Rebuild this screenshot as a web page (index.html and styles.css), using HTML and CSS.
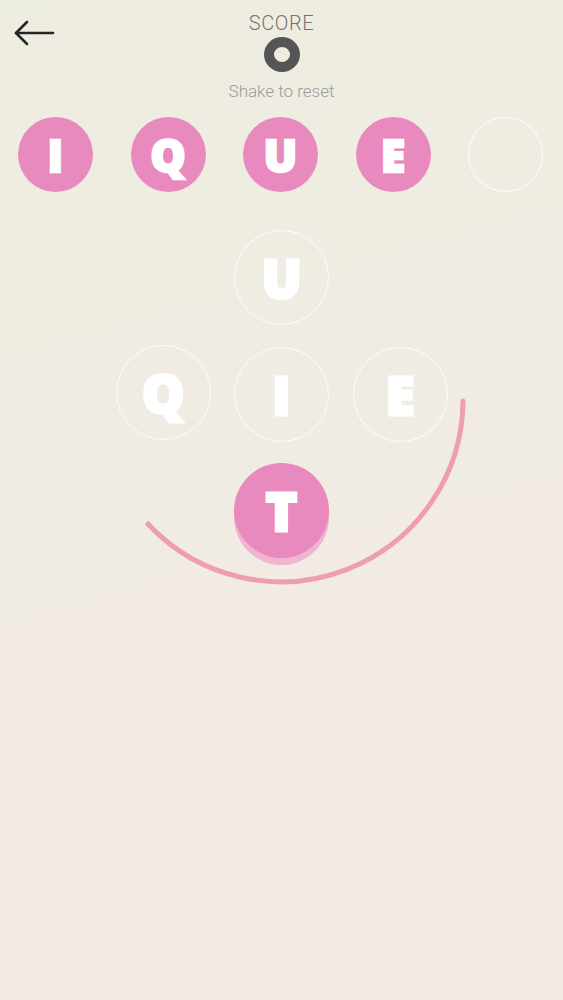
FILE: index.html
```html
<!DOCTYPE html>
<html lang="en">
<head>
<meta charset="utf-8">
<title>Score</title>
<link rel="stylesheet" href="styles.css">
</head>
<body>
<div class="app">
  <header class="top">
    <div class="back" aria-label="Back">
      <svg width="44" height="30" viewBox="0 0 44 30">
        <path d="M2 14 H39" fill="none" stroke="#262626" stroke-width="2.6" stroke-linecap="round"/>
        <path d="M13 3 L2 14 L13 25" fill="none" stroke="#262626" stroke-width="2.6" stroke-linecap="round" stroke-linejoin="round"/>
      </svg>
    </div>
    <div class="score">
      <div class="score-label">SCORE</div>
      <div class="score-value" role="img" aria-label="0"></div>
      <div class="hint">Shake to reset</div>
    </div>
    <div class="spacer"></div>
  </header>

  <div class="answer">
    <div class="slot filled">I</div>
    <div class="slot filled">Q</div>
    <div class="slot filled">U</div>
    <div class="slot filled">E</div>
    <div class="slot"></div>
  </div>

  <div class="board">
    <div class="cell"></div>
    <div class="tile">U</div>
    <div class="cell"></div>
    <div class="tile tile-q">Q</div>
    <div class="tile">I</div>
    <div class="tile">E</div>
    <div class="cell"></div>
    <div class="tile active">T</div>
    <div class="cell"></div>
  </div>

  <svg class="arc" width="563" height="1000" viewBox="0 0 563 1000">
    <path d="M463 401 A182 182 0 0 1 148 524" fill="none" stroke="#ee9db4" stroke-width="5" stroke-linecap="round"/>
  </svg>
</div>
</body>
</html>
```
FILE: styles.css
```css
* { box-sizing: border-box; }
html, body { margin: 0; padding: 0; }
body {
  width: 563px;
  height: 1000px;
  overflow: hidden;
  background: linear-gradient(165deg, #eeede1 0%, #f0ece3 35%, #f3eae4 100%);
  font-family: Roboto, "Liberation Sans", sans-serif;
}
.app {
  position: relative;
  width: 563px;
  height: 1000px;
}
.top {
  display: grid;
  grid-template-columns: 1fr auto 1fr;
  padding-top: 10px;
}
.back {
  padding: 9px 0 0 14px;
  line-height: 0;
}
.score {
  display: flex;
  flex-direction: column;
  align-items: center;
  padding-top: 2px;
}
.score-label {
  font-weight: 300;
  font-size: 20px;
  line-height: 22px;
  color: #747474;
  letter-spacing: 0.6px;
}
.score-value {
  margin-top: 3px;
  width: 36px;
  height: 35px;
  border: 10px solid #555555;
  border-radius: 50%;
}
.hint {
  margin-top: 10px;
  font-weight: 300;
  font-size: 17px;
  line-height: 19px;
  color: #9a9a9a;
}
.answer {
  display: flex;
  gap: 37.5px;
  padding-left: 18px;
  margin-top: 16px;
}
.slot {
  width: 75px;
  height: 75px;
  border-radius: 50%;
  border: 1.5px solid rgba(255,255,255,0.9);
  display: flex;
  align-items: center;
  justify-content: center;
  color: #ffffff;
  font-family: "Open Sans", "DejaVu Sans", sans-serif;
  font-weight: 800;
  font-size: 44px;
  line-height: 1;
  -webkit-text-stroke: 2.5px #ffffff;
}
.slot.filled {
  background: #e98abf;
  border: none;
}
.board {
  display: grid;
  grid-template-columns: repeat(3, 95px);
  grid-template-rows: repeat(3, 95px);
  column-gap: 23.5px;
  row-gap: 22px;
  margin-top: 38px;
  margin-left: 115.5px;
}
.tile {
  border-radius: 50%;
  border: 1.5px solid rgba(255,255,255,0.85);
  display: flex;
  align-items: center;
  justify-content: center;
  color: #ffffff;
  font-family: "Open Sans", "DejaVu Sans", sans-serif;
  font-weight: 800;
  font-size: 53px;
  line-height: 1;
  -webkit-text-stroke: 3px #ffffff;
}
.tile-q { transform: translateY(-2px); }
.tile.active {
  background: #e98abf;
  border: none;
  box-shadow: 0 7px 0 #f1b6cf;
  transform: translateY(-1px);
}
.arc {
  position: absolute;
  left: 0;
  top: 0;
  pointer-events: none;
}
```
